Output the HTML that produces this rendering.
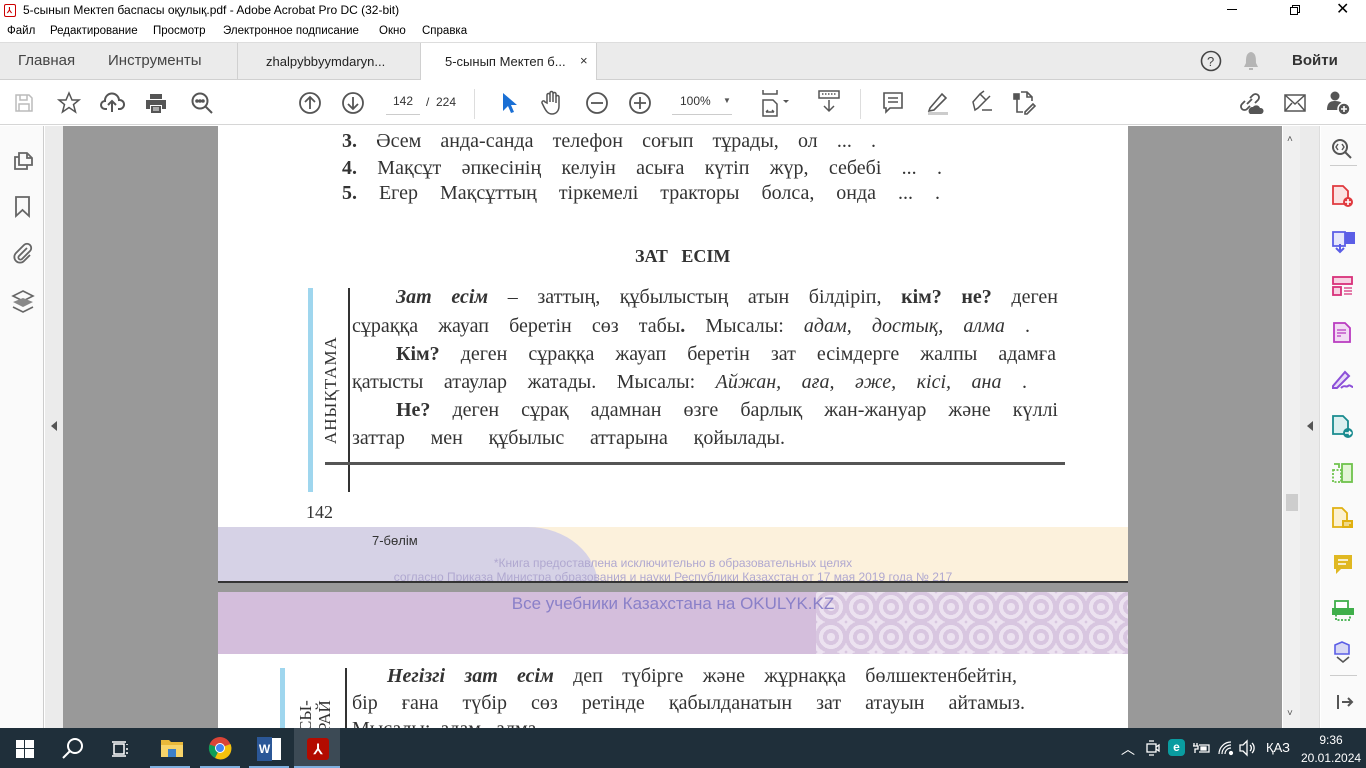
<!DOCTYPE html>
<html><head><meta charset="utf-8"><style>
*{margin:0;padding:0;box-sizing:border-box}
body{width:1366px;height:768px;overflow:hidden;position:relative;font-family:"Liberation Sans",sans-serif;background:#fff;color:#222}
.a{position:absolute}
.ser{font-family:"Liberation Serif",serif;color:#333}
svg{position:absolute;overflow:visible}
.ln{position:absolute;font-size:20px;white-space:nowrap;text-align:justify;text-align-last:justify}
.ln.nj{text-align:left;text-align-last:left}
</style></head><body>
<!-- title bar -->
<div class="a" style="left:0;top:0;width:1366px;height:20px;background:#fff"></div>
<div class="a" style="left:4px;top:4px;width:12px;height:13px;border:1px solid #c00;border-radius:2px;background:#fff"></div>
<div class="a" style="left:7px;top:6px;font-size:8px;color:#c00;font-weight:bold">⅄</div>
<div class="a" style="left:23px;top:3px;font-size:12px;color:#000">5-сынып Мектеп баспасы оқулық.pdf - Adobe Acrobat Pro DC (32-bit)</div>
<div class="a" style="left:1227px;top:9px;width:10px;height:1px;background:#000"></div>
<div class="a" style="left:1292px;top:5px;width:8px;height:8px;border:1px solid #000"></div>
<div class="a" style="left:1290px;top:7px;width:8px;height:8px;border:1px solid #000;background:#fff"></div>
<div class="a" style="left:1336px;top:-1px;font-size:16px;color:#000">✕</div>
<!-- menu -->
<div class="a" style="left:0;top:20px;width:1366px;height:22px;background:#fff;font-size:11.5px;color:#000">
<span class="a" style="left:7px;top:5px">Файл</span><span class="a" style="left:50px;top:5px">Редактирование</span><span class="a" style="left:153px;top:5px">Просмотр</span><span class="a" style="left:223px;top:5px">Электронное подписание</span><span class="a" style="left:379px;top:5px">Окно</span><span class="a" style="left:422px;top:5px">Справка</span></div>
<!-- tabs -->
<div class="a" style="left:0;top:42px;width:1366px;height:38px;background:#ebebeb;border-top:1px solid #ddd;border-bottom:1px solid #d0d0d0"></div>
<div class="a" style="left:18px;top:52px;font-size:15px;color:#444">Главная</div>
<div class="a" style="left:108px;top:52px;font-size:15px;color:#444">Инструменты</div>
<div class="a" style="left:237px;top:43px;width:1px;height:36px;background:#d0d0d0"></div>
<div class="a" style="left:266px;top:54px;font-size:13px;color:#222">zhalpybbyymdaryn...</div>
<div class="a" style="left:420px;top:43px;width:177px;height:37px;background:#fff;border-left:1px solid #d0d0d0;border-right:1px solid #d0d0d0"></div>
<div class="a" style="left:445px;top:54px;font-size:13px;color:#222">5-сынып Мектеп б...</div>
<div class="a" style="left:580px;top:53px;font-size:13px;color:#333">×</div>
<svg style="left:1200px;top:50px" width="22" height="22"><circle cx="11" cy="11" r="9.5" fill="none" stroke="#444" stroke-width="1.6"/><text x="7" y="16" font-size="13" fill="#444" font-family="Liberation Sans">?</text></svg>
<svg style="left:1242px;top:50px" width="18" height="22"><path d="M9 2 C4 3 4 8 4 13 L2 17 H16 L14 13 C14 8 14 3 9 2Z M7 18 H11 V20 H7Z" fill="#b5b5b5"/></svg>
<div class="a" style="left:1292px;top:52px;font-size:15px;font-weight:bold;color:#333">Войти</div>
<!-- toolbar -->
<div class="a" style="left:0;top:80px;width:1366px;height:45px;background:#fff;border-bottom:1px solid #d6d6d6"></div>
<svg style="left:14px;top:93px" width="20" height="20" fill="none" stroke="#bbb" stroke-width="1.5"><path d="M2 2H15L18 5V18H2Z M6 2V7H13V2 M5 11H15V18H5Z"/></svg>
<svg style="left:57px;top:91px" width="24" height="24" fill="none" stroke="#555" stroke-width="1.5"><path d="M12 2L15 9H22L16.5 13.5L18.5 21L12 16.5L5.5 21L7.5 13.5L2 9H9Z"/></svg>
<svg style="left:100px;top:92px" width="26" height="22" fill="none" stroke="#555" stroke-width="2"><path d="M7 17H5A4 4 0 0 1 5 9 A7 7 0 0 1 19 8 A4.5 4.5 0 0 1 20 17H18 M12 20V10 M8 13L12 9L16 13"/></svg>
<svg style="left:144px;top:92px" width="24" height="22"><path d="M6 2H18V7H6Z M2 8H22V17H18V13H6V17H2Z M7 14H17V21H7Z" fill="#555"/><path d="M9 16H15M9 18H15" stroke="#fff"/></svg>
<svg style="left:190px;top:91px" width="24" height="24" fill="none" stroke="#555" stroke-width="2"><circle cx="10" cy="10" r="7.5"/><path d="M15.5 15.5L22 22"/><circle cx="7" cy="10" r=".8" fill="#555"/><circle cx="10" cy="10" r=".8" fill="#555"/><circle cx="13" cy="10" r=".8" fill="#555"/></svg>
<svg style="left:298px;top:91px" width="24" height="24" fill="none" stroke="#555" stroke-width="1.8"><circle cx="12" cy="12" r="10"/><path d="M12 18V6M7 11L12 6L17 11"/></svg>
<svg style="left:341px;top:91px" width="24" height="24" fill="none" stroke="#555" stroke-width="1.8"><circle cx="12" cy="12" r="10"/><path d="M12 6V18M7 13L12 18L17 13"/></svg>
<div class="a" style="left:386px;top:94px;width:34px;font-size:12px;color:#333;text-align:center;border-bottom:1px solid #ccc;padding-bottom:6px">142</div>
<div class="a" style="left:426px;top:95px;font-size:12px;color:#333">/&nbsp;&nbsp;224</div>
<div class="a" style="left:474px;top:89px;width:1px;height:30px;background:#ddd"></div>
<svg style="left:500px;top:91px" width="18" height="24"><path d="M3 2L3 20L8 15L11 22L14 21L11 14L17 14Z" fill="#1a6fd4"/></svg>
<svg style="left:540px;top:90px" width="24" height="26" fill="none" stroke="#555" stroke-width="1.5"><path d="M7 13V5a1.5 1.5 0 0 1 3 0V12V3a1.5 1.5 0 0 1 3 0V12V4a1.5 1.5 0 0 1 3 0V13V7a1.5 1.5 0 0 1 3 0V16C19 21 16 24 12 24 8 24 6 21 4 17L2 13a1.5 1.5 0 0 1 3-1Z"/></svg>
<svg style="left:585px;top:91px" width="24" height="24" fill="none" stroke="#555" stroke-width="1.8"><circle cx="12" cy="12" r="10"/><path d="M6 12H18"/></svg>
<svg style="left:628px;top:91px" width="24" height="24" fill="none" stroke="#555" stroke-width="1.8"><circle cx="12" cy="12" r="10"/><path d="M6 12H18M12 6V18"/></svg>
<div class="a" style="left:672px;top:94px;width:60px;font-size:12px;color:#333;border-bottom:1px solid #ccc;padding:0 0 6px 8px">100%</div>
<div class="a" style="left:723px;top:96px;font-size:8px;color:#555">▼</div>
<svg style="left:761px;top:88px" width="30" height="30" fill="none" stroke="#555" stroke-width="1.5"><path d="M2 2V6H16V2 M2 28V12H12L16 16V28Z M5 24H13M5 24L7 22M13 24L11 22"/><path d="M22 12H28L25 15Z" fill="#555" stroke="none"/></svg>
<svg style="left:818px;top:89px" width="22" height="24" fill="none" stroke="#555" stroke-width="1.5"><rect x="1" y="2" width="20" height="7"/><path d="M4 5H18" stroke-dasharray="1.5 1.5"/><path d="M11 11V22M6 17L11 22L16 17"/></svg>
<div class="a" style="left:860px;top:89px;width:1px;height:30px;background:#ddd"></div>
<svg style="left:882px;top:91px" width="22" height="24" fill="none" stroke="#555" stroke-width="1.6"><path d="M2 2H20V17H8L4 21V17H2Z M6 7H16M6 11H16"/></svg>
<svg style="left:926px;top:90px" width="24" height="26"><path d="M4 18L16 4L20 8L8 20L3 21Z" fill="none" stroke="#555" stroke-width="1.6"/><rect x="2" y="22" width="20" height="3" fill="#ccc"/></svg>
<svg style="left:970px;top:90px" width="24" height="24" fill="none" stroke="#555" stroke-width="1.5"><path d="M5 20L3 12L10 4L16 10L8 18Z M10 4L14 1M16 10L20 6M12 20H22" /></svg>
<svg style="left:1013px;top:90px" width="24" height="26" fill="none" stroke="#555" stroke-width="1.6"><path d="M4 6V22H10 M8 2H14L19 7V11 M14 2V7H19 M12 22L20 14L22 16L14 24H12Z"/><rect x="1" y="4" width="5" height="5" fill="#555"/></svg>
<svg style="left:1238px;top:90px" width="26" height="26" fill="none" stroke="#555" stroke-width="1.8"><path d="M9 14L14 9 M7 11L4 14A3.5 3.5 0 0 0 9 19L12 16 M12 8L15 5A3.5 3.5 0 0 1 20 10L17 13"/><path d="M12 24A4 4 0 0 1 15 17A4 4 0 0 1 22 18A3 3 0 0 1 23 24Z" fill="#555" stroke="none"/></svg>
<svg style="left:1284px;top:94px" width="22" height="18" fill="none" stroke="#555" stroke-width="1.5"><rect x="1" y="1" width="20" height="16"/><path d="M1 1L11 10L21 1M1 17L8 9M21 17L14 9"/></svg>
<svg style="left:1326px;top:90px" width="26" height="26"><circle cx="9" cy="6" r="4.5" fill="#555"/><path d="M1 20C1 13 4 11 9 11S17 13 17 16V20Z" fill="#555"/><circle cx="18" cy="19" r="6" fill="#555" stroke="#fff" stroke-width="1.5"/><path d="M15 19H21M18 16V22" stroke="#fff" stroke-width="1.6"/></svg>
<!-- left nav -->
<div class="a" style="left:0;top:126px;width:44px;height:602px;background:#fafafa;border-right:1px solid #ccc"></div>
<svg style="left:13px;top:149px" width="22" height="22" fill="none" stroke="#666" stroke-width="1.8"><path d="M6 4H14L19 9V16H6Z M14 4V9H19 M6 8H2V20H14V16"/></svg>
<svg style="left:15px;top:196px" width="16" height="22" fill="none" stroke="#666" stroke-width="1.8"><path d="M1 1H14V20L7.5 14L1 20Z"/></svg>
<svg style="left:12px;top:242px" width="22" height="22" fill="none" stroke="#666" stroke-width="1.8"><path d="M15 6L7 14A2 2 0 0 0 10 17L18 9A4 4 0 0 0 12 3L4 11A5.5 5.5 0 0 0 12 19L18 13"/></svg>
<svg style="left:12px;top:290px" width="22" height="24" fill="#666"><path d="M11 1L21 6L11 11L1 6Z" fill="none" stroke="#666" stroke-width="1.6"/><path d="M11 8L21 12L11 17L1 12Z" fill="#888"/><path d="M1 17L11 22L21 17" fill="none" stroke="#666" stroke-width="1.6"/></svg>
<div class="a" style="left:45px;top:126px;width:18px;height:602px;background:#ebebeb"></div>
<div class="a" style="left:51px;top:421px;width:0;height:0;border-top:5px solid transparent;border-bottom:5px solid transparent;border-right:6px solid #555"></div>
<!-- doc bg -->
<div class="a" style="left:63px;top:126px;width:1219px;height:602px;background:#999"></div>
<!-- page 1 -->
<div class="a ser" style="left:218px;top:126px;width:910px;height:457px;background:#fff;overflow:hidden">
<div class="ln" style="left:124px;top:4px;width:534px"><b>3.</b> Әсем анда-санда телефон соғып тұрады, ол ... .</div>
<div class="ln" style="left:124px;top:31px;width:600px"><b>4.</b> Мақсұт әпкесінің келуін асыға күтіп жүр, себебі ... .</div>
<div class="ln" style="left:124px;top:56px;width:598px"><b>5.</b> Егер Мақсұттың тіркемелі тракторы болса, онда ... .</div>
<div class="ln nj" style="left:417px;top:120px;font-weight:bold;font-size:18px">ЗАТ&nbsp;&nbsp; ЕСІМ</div>
<div class="a" style="left:90px;top:162px;width:5px;height:204px;background:#9fd6ee"></div>
<div class="a" style="left:130px;top:162px;width:2px;height:204px;background:#333"></div>
<div class="a" style="left:107px;top:336px;width:740px;height:3px;background:#555"></div>
<div class="a" style="left:103px;top:318px;transform:rotate(-90deg);transform-origin:0 0;font-size:17px;letter-spacing:1px;white-space:nowrap">АНЫҚТАМА</div>
<div class="ln" style="left:178px;top:160px;width:662px"><b><i>Зат есім</i></b> – заттың, құбылыстың атын білдіріп, <b>кім? не?</b> деген</div>
<div class="ln" style="left:134px;top:189px;width:678px">сұраққа жауап беретін сөз табы<b>.</b> Мысалы: <i>адам, достық, алма</i> .</div>
<div class="ln" style="left:178px;top:217px;width:660px"><b>Кім?</b> деген сұраққа жауап беретін зат есімдерге жалпы адамға</div>
<div class="ln" style="left:134px;top:245px;width:675px">қатысты атаулар жатады. Мысалы: <i>Айжан, аға, әже, кісі, ана</i> .</div>
<div class="ln" style="left:178px;top:273px;width:662px"><b>Не?</b> деген сұрақ адамнан өзге барлық жан-жануар және күллі</div>
<div class="ln" style="left:134px;top:301px;width:433px">заттар мен құбылыс аттарына қойылады.</div>
<div class="ln nj" style="left:88px;top:376px;font-size:18px">142</div>
<div class="a" style="left:0;top:401px;width:910px;height:56px;background:#fcf1dc"></div>
<div class="a" style="left:-40px;top:401px;width:420px;height:90px;background:#d6d2e6;border-top-right-radius:70px 60px"></div>
<div class="a" style="left:154px;top:407px;font-size:13px;font-family:'Liberation Sans Narrow','Liberation Sans',sans-serif;color:#333">7-бөлім</div>
<div class="a" style="left:0;top:430px;width:910px;text-align:center;font-size:12px;color:#b0a8d0;font-family:'Liberation Sans',sans-serif;line-height:14px">*Книга предоставлена исключительно в образовательных целях<br>согласно Приказа Министра образования и науки Республики Казахстан от 17 мая 2019 года № 217</div>
<div class="a" style="left:0;top:455px;width:910px;height:2px;background:#333"></div>
</div>
<!-- page 2 -->
<div class="a ser" style="left:218px;top:592px;width:910px;height:136px;background:#fff;overflow:hidden">
<div class="a" style="left:0;top:0;width:910px;height:62px;background:#d4bedc"></div>
<div class="a" style="left:598px;top:0;width:312px;height:62px;background:repeating-radial-gradient(circle at 15px 15px,#ece2f0 0 4px,#d8c6e0 4px 8px);background-size:30px 30px"></div>
<div class="a" style="left:0;top:2px;width:910px;text-align:center;font-size:17px;color:#8a80c8;font-family:'Liberation Sans',sans-serif">Все учебники Казахстана на OKULYK.KZ</div>
<div class="a" style="left:62px;top:76px;width:5px;height:70px;background:#9fd6ee"></div>
<div class="a" style="left:127px;top:76px;width:2px;height:70px;background:#333"></div>
<div class="a" style="left:78px;top:140px;transform:rotate(-90deg);transform-origin:0 0;font-size:17px;white-space:nowrap;line-height:19px">СЫ-<br>РАЙ</div>
<div class="ln" style="left:169px;top:73px;width:630px"><b><i>Негізгі зат есім</i></b> деп түбірге және жұрнаққа бөлшектенбейтін,</div>
<div class="ln" style="left:134px;top:100px;width:673px">бір ғана түбір сөз ретінде қабылданатын зат атауын айтамыз.</div>
<div class="ln nj" style="left:134px;top:126px">Мысалы:&nbsp; адам,&nbsp; алма</div>
</div>
<!-- scrollbar -->
<div class="a" style="left:1283px;top:126px;width:17px;height:602px;background:#f0f0f0"></div>
<div class="a" style="left:1286px;top:494px;width:12px;height:17px;background:#cdcdcd"></div>
<div class="a" style="left:1287px;top:134px;font-size:10px;color:#555">˄</div>
<div class="a" style="left:1287px;top:708px;font-size:10px;color:#555">˅</div>
<div class="a" style="left:1300px;top:126px;width:20px;height:602px;background:#ebebeb;border-right:1px solid #ddd"></div>
<div class="a" style="left:1307px;top:421px;width:0;height:0;border-top:5px solid transparent;border-bottom:5px solid transparent;border-right:6px solid #555"></div>
<!-- right panel -->
<div class="a" style="left:1321px;top:126px;width:45px;height:602px;background:#fafafa"></div>
<svg style="left:1331px;top:138px" width="22" height="22" fill="none" stroke="#555" stroke-width="2"><circle cx="9" cy="9" r="7"/><path d="M14 14L20 20"/><path d="M7 6L5 9L7 12M11 6L13 9L11 12" stroke-width="1.4"/></svg>
<div class="a" style="left:1330px;top:165px;width:27px;height:1px;background:#ccc"></div>
<svg style="left:1331px;top:184px" width="24" height="24"><path d="M2 2H12L17 7V20H2Z" fill="#fbe3e3" stroke="#e0393e" stroke-width="1.8"/><circle cx="17" cy="18" r="5" fill="#e0393e"/><path d="M14 18H20M17 15V21" stroke="#fff" stroke-width="1.6"/></svg>
<svg style="left:1331px;top:228px" width="24" height="26"><path d="M2 4H14V18H2Z" fill="#e5e6fb" stroke="#5b5ee6" stroke-width="1.8"/><path d="M14 4H24V16H14Z" fill="#5b5ee6"/><path d="M9 16V24M5 20L9 24L13 20" stroke="#5b5ee6" stroke-width="2" fill="none"/></svg>
<svg style="left:1331px;top:275px" width="24" height="24"><rect x="2" y="2" width="19" height="7" fill="#f7d3e3" stroke="#d8307a" stroke-width="1.8"/><rect x="2" y="12" width="8" height="8" fill="#f7d3e3" stroke="#d8307a" stroke-width="1.8"/><path d="M13 13H21M13 16H21M13 19H21" stroke="#d8307a" stroke-width="1.3"/></svg>
<svg style="left:1332px;top:321px" width="22" height="24"><path d="M2 2H13L18 7V21H2Z" fill="#f2dcf4" stroke="#b93bc0" stroke-width="1.8"/><path d="M5 9H14M5 12H14M5 15H9" stroke="#b93bc0" stroke-width="1.3"/></svg>
<svg style="left:1331px;top:368px" width="24" height="24" fill="none" stroke="#8c4fd8" stroke-width="2"><path d="M2 18L14 4L18 8L6 20L2 20Z" fill="#e8dcf8"/><path d="M10 20C14 16 15 20 17 18S20 19 22 19"/></svg>
<svg style="left:1331px;top:414px" width="24" height="26"><path d="M2 2H12L17 7V20H2Z" fill="#dcf0f0" stroke="#198b8f" stroke-width="1.8"/><circle cx="17" cy="19" r="5" fill="#198b8f"/><path d="M14 19H20M18 17L20 19L18 21" stroke="#fff" stroke-width="1.4" fill="none"/></svg>
<svg style="left:1331px;top:461px" width="24" height="24"><rect x="11" y="3" width="10" height="18" fill="#e3f5d5" stroke="#6fc24c" stroke-width="1.8"/><rect x="2" y="9" width="8" height="12" fill="none" stroke="#6fc24c" stroke-width="1.8" stroke-dasharray="2 1.5"/><path d="M3 3H8V7" fill="none" stroke="#6fc24c" stroke-width="1.8"/></svg>
<svg style="left:1331px;top:506px" width="24" height="26"><path d="M2 2H11L16 7V21H2Z" fill="#fcf1cf" stroke="#e0b010" stroke-width="1.8"/><rect x="11" y="14" width="11" height="8" fill="#e0b010"/><path d="M13 17H20M13 19H18" stroke="#fff"/></svg>
<svg style="left:1332px;top:553px" width="22" height="24"><path d="M2 2H20V16H9L4 21V16H2Z" fill="#e0b822"/><path d="M6 7H16M6 11H14" stroke="#fff" stroke-width="1.6"/></svg>
<svg style="left:1331px;top:598px" width="24" height="24"><rect x="4" y="3" width="13" height="8" fill="#fff" stroke="#3fae4a" stroke-width="1.8"/><rect x="1" y="10" width="22" height="7" fill="#3fae4a"/><rect x="5" y="15" width="14" height="7" fill="none" stroke="#3fae4a" stroke-width="1.8" stroke-dasharray="2 1.5"/></svg>
<svg style="left:1334px;top:642px" width="18" height="12"><path d="M1 3L8 0L15 3V12H1Z" fill="#d8d8f4" stroke="#5b5ee6" stroke-width="1.6"/></svg>
<svg style="left:1336px;top:656px" width="14" height="8" fill="none" stroke="#555" stroke-width="1.6"><path d="M1 1L7 6L13 1"/></svg>
<div class="a" style="left:1330px;top:675px;width:27px;height:1px;background:#ccc"></div>
<svg style="left:1336px;top:693px" width="18" height="18" fill="none" stroke="#555" stroke-width="2"><path d="M2 2V16M6 9H16M12 5L16 9L12 13"/></svg>
<!-- taskbar -->
<div class="a" style="left:0;top:728px;width:1366px;height:40px;background:#1f2f3a"></div>
<svg style="left:16px;top:740px" width="18" height="18" fill="#fff"><rect x="0" y="0" width="8" height="8"/><rect x="9" y="0" width="9" height="8"/><rect x="0" y="9" width="8" height="9"/><rect x="9" y="9" width="9" height="9"/></svg>
<svg style="left:61px;top:737px" width="24" height="24" fill="none" stroke="#fff" stroke-width="2"><circle cx="14" cy="9" r="7"/><path d="M9 14L2 21"/></svg>
<svg style="left:111px;top:740px" width="18" height="18" fill="none" stroke="#fff" stroke-width="1.5"><rect x="3" y="4" width="10" height="10"/><path d="M1 2H15M1 16H15M16 4V5M16 8V10M16 12V14"/></svg>
<svg style="left:160px;top:737px" width="24" height="22"><path d="M1 3H9L11 5H23V20H1Z" fill="#e8b83a"/><path d="M1 8H23V20H1Z" fill="#f7d46a"/><rect x="8" y="12" width="8" height="8" fill="#3c7fc8"/></svg>
<div class="a" style="left:150px;top:766px;width:40px;height:2px;background:#7fb0e0"></div>
<svg style="left:208px;top:736px" width="24" height="24"><circle cx="12" cy="12" r="11" fill="#db4437"/><path d="M12 12L22.5 8A11 11 0 0 1 7 22Z" fill="#f4c20d"/><path d="M12 12L7 22A11 11 0 0 1 1.5 8.5Z" fill="#0f9d58"/><circle cx="12" cy="12" r="5" fill="#fff"/><circle cx="12" cy="12" r="4" fill="#4285f4"/></svg>
<div class="a" style="left:200px;top:766px;width:40px;height:2px;background:#7fb0e0"></div>
<div class="a" style="left:258px;top:738px;width:23px;height:22px;background:#fff"></div>
<div class="a" style="left:257px;top:737px;width:15px;height:24px;background:#2b5797;color:#fff;font-size:12px;font-weight:bold;text-align:center;line-height:24px">W</div>
<div class="a" style="left:249px;top:766px;width:40px;height:2px;background:#7fb0e0"></div>
<div class="a" style="left:294px;top:728px;width:46px;height:40px;background:#3c4a55"></div>
<div class="a" style="left:307px;top:738px;width:22px;height:22px;background:#b30b00;border-radius:3px;color:#fff;font-size:14px;text-align:center;line-height:22px;font-weight:bold">⅄</div>
<div class="a" style="left:294px;top:766px;width:46px;height:2px;background:#7fb0e0"></div>
<div class="a" style="left:1121px;top:739px;font-size:14px;color:#fff">︿</div>
<svg style="left:1146px;top:740px" width="14" height="16" fill="none" stroke="#fff" stroke-width="1.3"><rect x="1" y="4" width="9" height="8"/><path d="M10 7L13 5V11L10 9 M3 1H8M3 15H8"/></svg>
<div class="a" style="left:1168px;top:739px;width:17px;height:17px;border-radius:4px;background:#0a9ca0;color:#fff;font-size:12px;font-weight:bold;text-align:center;line-height:17px">e</div>
<svg style="left:1192px;top:741px" width="18" height="14" fill="none" stroke="#fff" stroke-width="1.3"><path d="M2 2V5M5 2V5M1 5H6V8H3V12M7 4H17V11H7" /><rect x="9" y="6" width="5" height="3" fill="#fff"/></svg>
<svg style="left:1218px;top:741px" width="16" height="14" fill="none" stroke="#fff" stroke-width="1.2"><path d="M1 13A12 12 0 0 1 13 1M4 13A9 9 0 0 1 13 4M7 13A6 6 0 0 1 13 7"/><circle cx="13" cy="12" r="1.5" fill="#fff"/></svg>
<svg style="left:1239px;top:740px" width="18" height="16" fill="none" stroke="#fff" stroke-width="1.3"><path d="M1 5H4L8 1V15L4 11H1Z M11 5A4 4 0 0 1 11 11M13 3A7 7 0 0 1 13 13"/></svg>
<div class="a" style="left:1266px;top:740px;font-size:13px;color:#fff">ҚАЗ</div>
<div class="a" style="left:1301px;top:731px;width:60px;font-size:12px;color:#fff;text-align:center;line-height:18px">9:36<br>20.01.2024</div>
</body></html>
